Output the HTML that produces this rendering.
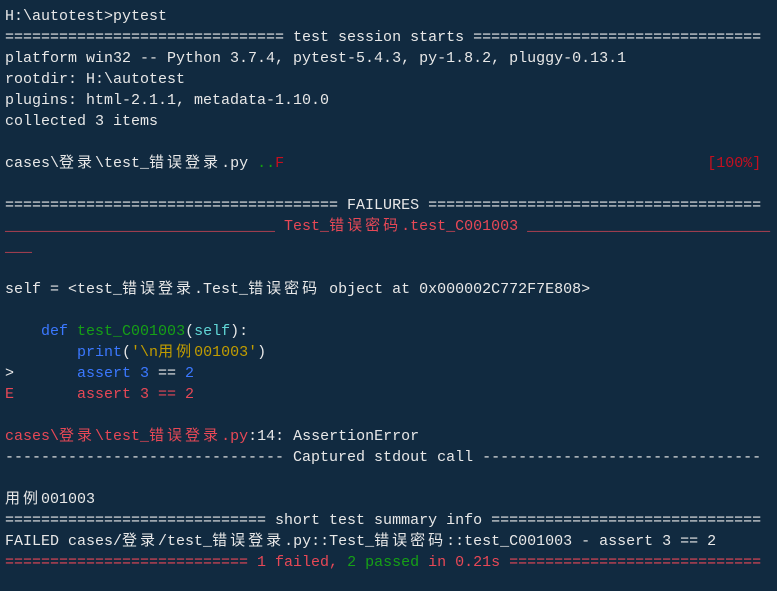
<!DOCTYPE html>
<html><head><meta charset="utf-8"><style>
html,body{margin:0;padding:0;background:#112a40;width:777px;height:591px;overflow:hidden}
pre{margin:0;padding:6px 0 0 5px;font-family:"Liberation Mono","Noto Sans CJK SC",monospace;font-size:15px;line-height:21px;color:#e8e8e8;white-space:pre}
.c{letter-spacing:3px}
.r{color:#e74856}.g{color:#16a016}.b{color:#3b78ff}.y{color:#c19c00}.cy{color:#61d6d6}.gr{color:#13a10e}.dr{color:#c50f1f}
</style></head><body><pre>H:\autotest&gt;pytest
=============================== test session starts ================================
platform win32 -- Python 3.7.4, pytest-5.4.3, py-1.8.2, pluggy-0.13.1
rootdir: H:\autotest
plugins: html-2.1.1, metadata-1.10.0
collected 3 items

cases\<span class="c">登录</span>\test_<span class="c">错误登录</span>.py <span class="gr">..</span><span class="dr">F</span>                                               <span class="dr">[100%]</span>

===================================== FAILURES =====================================
<span class="r">______________________________ Test_<span class="c">错误密码</span>.test_C001003 ___________________________
___</span>

self = &lt;test_<span class="c">错误登录</span>.Test_<span class="c">错误密码</span> object at 0x000002C772F7E808&gt;

    <span class="b">def</span> <span class="g">test_C001003</span>(<span class="cy">self</span>):
        <span class="b">print</span>(<span class="y">'\n<span class="c">用例</span>001003'</span>)
&gt;       <span class="b">assert 3</span> == <span class="b">2</span>
<span class="r">E       assert 3 == 2</span>

<span class="r">cases\<span class="c">登录</span>\test_<span class="c">错误登录</span>.py</span>:14: AssertionError
------------------------------- Captured stdout call -------------------------------

<span class="c">用例</span>001003
============================= short test summary info ==============================
FAILED cases/<span class="c">登录</span>/test_<span class="c">错误登录</span>.py::Test_<span class="c">错误密码</span>::test_C001003 - assert 3 == 2
<span class="r">=========================== 1 failed, </span><span class="g">2 passed</span><span class="r"> in 0.21s ============================</span></pre></body></html>
